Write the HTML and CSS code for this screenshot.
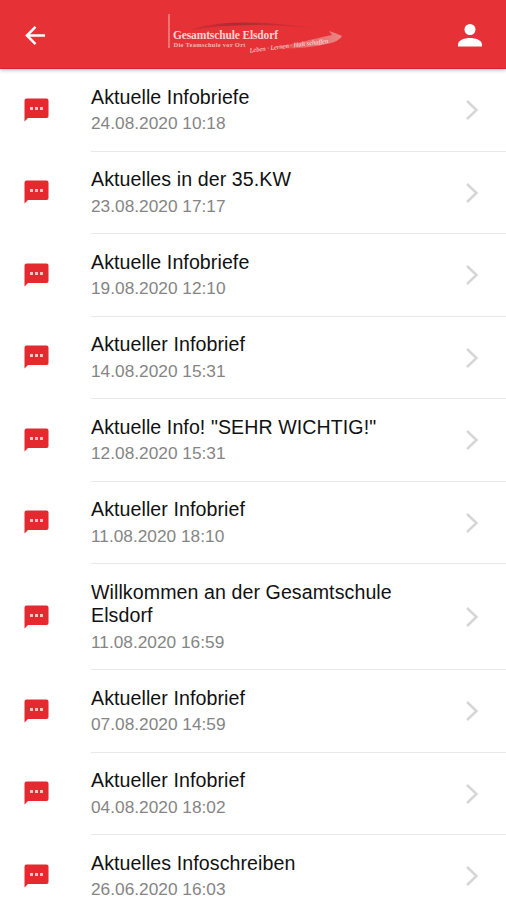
FILE: index.html
```html
<!DOCTYPE html>
<html lang="de">
<head>
    <meta charset="UTF-8">
    <meta name="viewport" content="width=device-width, initial-scale=1.0">
    <title>Gesamtschule Elsdorf</title>
    <link rel="stylesheet" href="styles.css">
</head>
<body>
    <header class="header">
        <svg class="back-icon" viewBox="0 0 22 22">
            <path d="M21 11H2.500M11 2L2 11l9 9" />
        </svg>
        <!-- School logo -->
        <svg class="logo" viewBox="0 0 180 44">
            <defs>
                <linearGradient id="swoosh" x1="0" x2="1">
                    <stop offset="0" stop-color="#e8706f" stop-opacity="0" />
                    <stop offset="0.45" stop-color="#e87f7c" stop-opacity="0.7" />
                    <stop offset="1" stop-color="#ea8583" />
                </linearGradient>
                <linearGradient id="arc" x1="0" x2="1">
                    <stop offset="0" stop-color="#b32c30" stop-opacity="0.3" />
                    <stop offset="0.35" stop-color="#a92c30" />
                    <stop offset="1" stop-color="#c42c30" stop-opacity="0.3" />
                </linearGradient>
            </defs>
            <path d="M24 20Q60 4 157 18Q75 9 24 20Z" fill="url(#arc)" />
            <path d="M105 37C125 34 150 28 168 24L165 20Q172 22 178 25Q176 30 163 33Q135 39 105 37Z" fill="url(#swoosh)" />
            <path class="logo-bar" d="M5 3V37" />
            <text class="logo-name" x="9" y="28" textLength="105">Gesamtschule Elsdorf</text>
            <text class="logo-sub" x="9.500" y="36" textLength="72">Die Teamschule vor Ort</text>
            <text class="logo-claim" x="86" y="41.500" textLength="79" transform="rotate(-7 86 41.500)">Leben · Lernen · Halt schaffen</text>
        </svg>
        <svg class="user-icon" viewBox="0 0 24 24">
            <circle cx="12" cy="6.500" r="5.500" />
            <path d="M0 23.500v-2C0 17 7 15 12 15s12 2 12 6.500v2Z" />
        </svg>
    </header>

    <ul class="list"></ul>

    <script>
        const messages = [
            ['Aktuelle Infobriefe', '24.08.2020 10:18'],
            ['Aktuelles in der 35.KW', '23.08.2020 17:17'],
            ['Aktuelle Infobriefe', '19.08.2020 12:10'],
            ['Aktueller Infobrief', '14.08.2020 15:31'],
            ['Aktuelle Info! "SEHR WICHTIG!"', '12.08.2020 15:31'],
            ['Aktueller Infobrief', '11.08.2020 18:10'],
            ['Willkommen an der Gesamtschule Elsdorf', '11.08.2020 16:59'],
            ['Aktueller Infobrief', '07.08.2020 14:59'],
            ['Aktueller Infobrief', '04.08.2020 18:02'],
            ['Aktuelles Infoschreiben', '26.06.2020 16:03']
        ];

        // Build one row per message
        document.querySelector('.list').innerHTML = messages.map(([title, date]) => `
            <li class="item">
                <svg class="message-icon" viewBox="0 0 25 24">
                    <path d="M2.500 .5H22.500Q24.500 .5 24.500 2.500V18Q24.500 20 22.500 20H4L.5 23.500V2.500Q.5 .5 2.500 .5Z" />
                    <path class="dots" d="M6 9h3v3H6zM11 9h3v3h-3zM16 9h3v3h-3z" />
                </svg>
                <div class="item-body">
                    <div class="item-text">
                        <div class="item-title">${title}</div>
                        <div class="item-date">${date}</div>
                    </div>
                    <svg class="chevron" viewBox="0 0 12 20">
                        <path d="M1 1l9.500 9L1 19" />
                    </svg>
                </div>
            </li>`).join('');
    </script>
</body>
</html>
```

FILE: styles.css
```css
* {
    box-sizing: border-box;
}

body {
    margin: 0;
    height: 900px;
    overflow: hidden;
    background: #fff;
    font-family: "Liberation Sans", Arial, sans-serif;
}

/* Header */
.header {
    position: relative;
    display: flex;
    justify-content: space-between;
    align-items: center;
    height: 69px;
    padding: 0 24px 0 25px;
    background: #e63237;
    border-bottom: 1px solid #cf2930;
    box-shadow: 0 1px 4px rgba(0, 0, 0, 0.3);
}

.back-icon {
    width: 21px;
    height: 21px;
    margin-top: 2px;
    fill: none;
    stroke: #fff;
    stroke-width: 2.6;
}

.logo {
    width: 180px;
    height: 44px;
    margin-left: 4px;
    margin-bottom: 3px;
}

.logo-bar {
    stroke: #f08a8b;
    stroke-width: 1.5;
}

.logo-name,
.logo-sub {
    font-family: "Liberation Serif", serif;
    font-weight: bold;
}

.logo-name {
    font-size: 11.5px;
    fill: #fbd3d3;
}

.logo-sub {
    font-size: 6.5px;
    fill: #f6b4b4;
}

.logo-claim {
    font-family: "Liberation Serif", serif;
    font-size: 6.5px;
    font-style: italic;
    fill: #fce4e4;
}

.user-icon {
    width: 24px;
    height: 24px;
    margin-top: 1px;
    fill: #fff;
}

/* Message list */
.list {
    margin: 0;
    padding: 0;
    list-style: none;
}

.item {
    display: flex;
    align-items: center;
    padding-left: 24px;
}

.message-icon {
    flex: none;
    width: 25px;
    height: 24px;
    margin-bottom: 1px;
    fill: #e4292f;
}

.dots {
    fill: #fbc4c4;
}

.item-body {
    flex: 1;
    display: flex;
    align-items: center;
    margin-left: 42px;
    padding: 16.5px 28px 15px 0;
    border-bottom: 1.5px solid #e8e8e8;
}

.item-text {
    flex: 1;
    padding-right: 40px;
}

.item-title {
    font-size: 19.6px;
    line-height: 23.5px;
    letter-spacing: 0.08px;
    color: #111;
}

.item-date {
    margin-top: 2px;
    font-size: 17.3px;
    line-height: 24.5px;
    color: #858585;
}

.chevron {
    width: 12px;
    height: 20px;
    margin-bottom: 1px;
    fill: none;
    stroke: #d6d6d6;
    stroke-width: 2.5;
}
```
